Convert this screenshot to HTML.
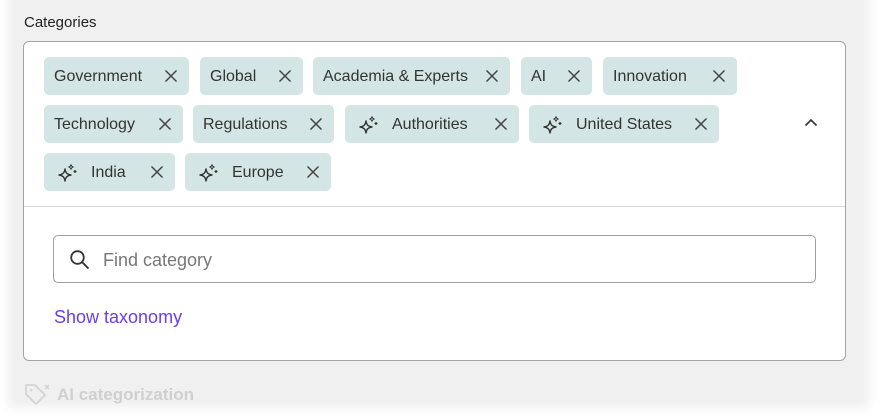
<!DOCTYPE html><html><head><style>
body{margin:0;width:881px;height:418px;background:#fff;position:relative;overflow:hidden;font-family:"Liberation Sans",sans-serif}
.bg{position:absolute;left:14px;top:-10px;width:850px;height:412px;background:#f0f0f0;box-shadow:0 0 10px 6px #f0f0f0}
.lbl{position:absolute;left:24px;top:14px;font-size:15px;color:#222}
.box{position:absolute;left:23px;top:41px;width:821px;height:318px;background:#fff;border:1px solid #a3a3a3;border-radius:6px}
.div{position:absolute;left:24px;top:206px;width:821px;height:1px;background:#d6d6d6}
.t{position:absolute;height:38px;background:#d3e5e5;border-radius:5px;font-size:16px;color:#333;line-height:40px;box-sizing:border-box;padding-left:10px}
.t.s{padding-left:47px}
.t svg.x{position:absolute;right:11px;top:12px}
.t svg.sp{position:absolute;left:13px;top:10px}
.search{position:absolute;left:53px;top:235px;width:761px;height:46px;border:1px solid #9e9e9e;border-radius:5px;background:#fff}
.search span{position:absolute;left:49px;top:14px;font-size:18px;color:#777}
.link{position:absolute;left:54px;top:307px;font-size:18px;color:#6a3df0}
.ai{position:absolute;left:57px;top:385px;font-size:17px;color:#d0d0d0;font-weight:bold}
</style></head><body>
<div class="bg"></div>
<div class="lbl">Categories</div>
<div class="box"></div>
<div class="div"></div>
<svg width="0" height="0" style="position:absolute"><defs>
<symbol id="x" viewBox="0 0 14 14"><path d="M1.5 1.5L12.5 12.5M12.5 1.5L1.5 12.5" stroke="#444" stroke-width="1.5" fill="none"/></symbol>
<symbol id="sp" viewBox="0 0 22 22"><path d="M8 6C8.7 10 10 11.3 14 12C10 12.7 8.7 14 8 18C7.3 14 6 12.7 2 12C6 11.3 7.3 10 8 6Z" stroke="#333" stroke-width="1.4" fill="none" stroke-linejoin="round"/><path d="M14 1.5C14.3 3.2 14.8 3.7 16.5 4C14.8 4.3 14.3 4.8 14 6.5C13.7 4.8 13.2 4.3 11.5 4C13.2 3.7 13.7 3.2 14 1.5Z" stroke="#333" stroke-width="1.1" fill="none"/><path d="M18 7V10M16.5 8.5H19.5" stroke="#333" stroke-width="1.2"/></symbol>
</defs></svg>
<div class="t" style="left:44px;top:57px;width:145px">Government<svg class="x" width="14" height="14"><use href="#x"/></svg></div>
<div class="t" style="left:200px;top:57px;width:103px">Global<svg class="x" width="14" height="14"><use href="#x"/></svg></div>
<div class="t" style="left:313px;top:57px;width:197px">Academia &amp; Experts<svg class="x" width="14" height="14"><use href="#x"/></svg></div>
<div class="t" style="left:521px;top:57px;width:71px">AI<svg class="x" width="14" height="14"><use href="#x"/></svg></div>
<div class="t" style="left:603px;top:57px;width:134px">Innovation<svg class="x" width="14" height="14"><use href="#x"/></svg></div>
<div class="t" style="left:44px;top:105px;width:139px">Technology<svg class="x" width="14" height="14"><use href="#x"/></svg></div>
<div class="t" style="left:193px;top:105px;width:141px">Regulations<svg class="x" width="14" height="14"><use href="#x"/></svg></div>
<div class="t s" style="left:345px;top:105px;width:174px"><svg class="sp" width="22" height="22"><use href="#sp"/></svg>Authorities<svg class="x" width="14" height="14"><use href="#x"/></svg></div>
<div class="t s" style="left:529px;top:105px;width:190px"><svg class="sp" width="22" height="22"><use href="#sp"/></svg>United States<svg class="x" width="14" height="14"><use href="#x"/></svg></div>
<div class="t s" style="left:44px;top:153px;width:131px"><svg class="sp" width="22" height="22"><use href="#sp"/></svg>India<svg class="x" width="14" height="14"><use href="#x"/></svg></div>
<div class="t s" style="left:185px;top:153px;width:146px"><svg class="sp" width="22" height="22"><use href="#sp"/></svg>Europe<svg class="x" width="14" height="14"><use href="#x"/></svg></div>
<svg style="position:absolute;left:804px;top:118px" width="14" height="10"><path d="M1.5 7.5L7 2L12.5 7.5" stroke="#333" stroke-width="1.6" fill="none"/></svg>
<div class="search"><svg style="position:absolute;left:15px;top:13px" width="22" height="22"><circle cx="8.5" cy="8.5" r="6.3" stroke="#333" stroke-width="1.8" fill="none"/><path d="M13 13L19.5 19.5" stroke="#333" stroke-width="1.9"/></svg><span>Find category</span></div>
<div class="link">Show taxonomy</div>
<svg style="position:absolute;left:23px;top:382px" width="28" height="24"><path d="M3 3H12L22 13L13 22L3 12Z" stroke="#d3d3d3" stroke-width="1.8" fill="none" stroke-linejoin="round"/><circle cx="8" cy="8" r="1.3" fill="#d3d3d3"/><path d="M22 3l4 4M26 3l-4 4" stroke="#d3d3d3" stroke-width="1.5"/></svg>
<div class="ai">AI categorization</div>
</body></html>
